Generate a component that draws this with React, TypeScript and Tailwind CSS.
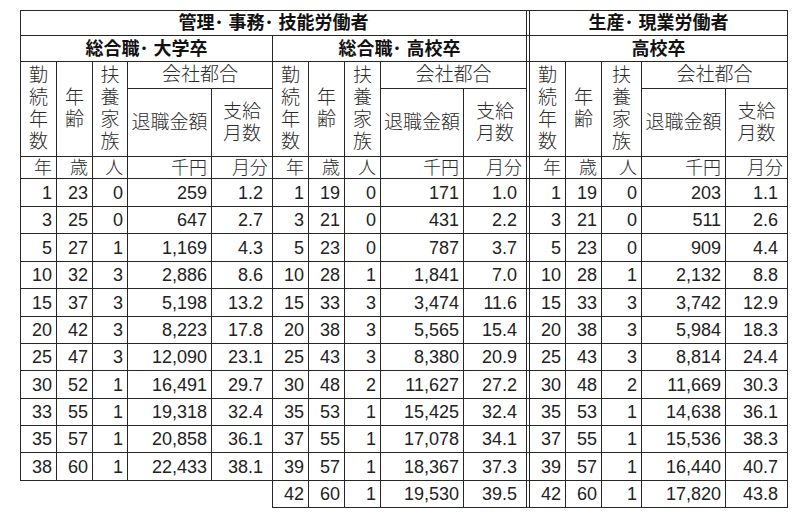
import React from "react";

type Row = [string, string, string, string, string];

const g1: Row[] = [
  ["1", "23", "0", "259", "1.2"],
  ["3", "25", "0", "647", "2.7"],
  ["5", "27", "1", "1,169", "4.3"],
  ["10", "32", "3", "2,886", "8.6"],
  ["15", "37", "3", "5,198", "13.2"],
  ["20", "42", "3", "8,223", "17.8"],
  ["25", "47", "3", "12,090", "23.1"],
  ["30", "52", "1", "16,491", "29.7"],
  ["33", "55", "1", "19,318", "32.4"],
  ["35", "57", "1", "20,858", "36.1"],
  ["38", "60", "1", "22,433", "38.1"],
];

const g2: Row[] = [
  ["1", "19", "0", "171", "1.0"],
  ["3", "21", "0", "431", "2.2"],
  ["5", "23", "0", "787", "3.7"],
  ["10", "28", "1", "1,841", "7.0"],
  ["15", "33", "3", "3,474", "11.6"],
  ["20", "38", "3", "5,565", "15.4"],
  ["25", "43", "3", "8,380", "20.9"],
  ["30", "48", "2", "11,627", "27.2"],
  ["35", "53", "1", "15,425", "32.4"],
  ["37", "55", "1", "17,078", "34.1"],
  ["39", "57", "1", "18,367", "37.3"],
  ["42", "60", "1", "19,530", "39.5"],
];

const g3: Row[] = [
  ["1", "19", "0", "203", "1.1"],
  ["3", "21", "0", "511", "2.6"],
  ["5", "23", "0", "909", "4.4"],
  ["10", "28", "1", "2,132", "8.8"],
  ["15", "33", "3", "3,742", "12.9"],
  ["20", "38", "3", "5,984", "18.3"],
  ["25", "43", "3", "8,814", "24.4"],
  ["30", "48", "2", "11,669", "30.3"],
  ["35", "53", "1", "14,638", "36.1"],
  ["37", "55", "1", "15,536", "38.3"],
  ["39", "57", "1", "16,440", "40.7"],
  ["42", "60", "1", "17,820", "43.8"],
];

const rowHeights = [
  "h-[28px]",
  "h-[27px]",
  "h-[28px]",
  "h-[27px]",
  "h-[28px]",
  "h-[27px]",
  "h-[27px]",
  "h-[28px]",
  "h-[27px]",
  "h-[27px]",
  "h-[28px]",
  "h-[27px]",
];

const B = "border border-[#262626]";
const NUM = `${B} text-right pr-[4px] text-[18px]`;
const NUM_LAST = `${B} text-right pr-[9px] text-[18px]`;
const JP = `${B} text-center text-[19px] font-light text-[#2a2a2a]`;

function DataCells({ r }: { r: Row | undefined }) {
  if (!r) {
    return (
      <>
        <td />
        <td />
        <td />
        <td />
        <td />
      </>
    );
  }
  return (
    <>
      <td className={NUM}>{r[0]}</td>
      <td className={NUM}>{r[1]}</td>
      <td className={NUM}>{r[2]}</td>
      <td className={NUM}>{r[3]}</td>
      <td className={NUM_LAST}>{r[4]}</td>
    </>
  );
}

function HeadTop() {
  return (
    <>
      <td rowSpan={2} className={`${JP} leading-[22px]`}>
        勤<br />続<br />年<br />数
      </td>
      <td rowSpan={2} className={`${JP} leading-[22px]`}>
        年<br />齢
      </td>
      <td rowSpan={2} className={`${JP} leading-[22px]`}>
        扶<br />養<br />家<br />族
      </td>
      <td colSpan={2} className={JP}>
        会社都合
      </td>
    </>
  );
}

function HeadSub() {
  return (
    <>
      <td className={JP}>退職金額</td>
      <td className={`${JP} leading-[22px]`}>
        支給
        <br />
        月数
      </td>
    </>
  );
}

const UNIT = `${B} text-right pr-[4px] text-[18px] font-light text-[#2a2a2a]`;

function Units() {
  return (
    <>
      <td className={UNIT}>年</td>
      <td className={UNIT}>歳</td>
      <td className={UNIT}>人</td>
      <td className={UNIT}>千円</td>
      <td className={UNIT}>月分</td>
    </>
  );
}

export default function App() {
  return (
    <div className="w-[800px] h-[515px] bg-white pt-[10px] pl-[20px] text-[#222] font-['Liberation_Sans','Noto_Sans_CJK_JP',sans-serif] leading-[20px]">
      <table className="table-fixed border-collapse w-[767px]">
        <colgroup>
          <col className="w-[36px]" />
          <col className="w-[36px]" />
          <col className="w-[35px]" />
          <col className="w-[84px]" />
          <col className="w-[61px]" />
          <col className="w-[36px]" />
          <col className="w-[36px]" />
          <col className="w-[36px]" />
          <col className="w-[83px]" />
          <col className="w-[63px]" />
          <col className="w-[3px]" />
          <col className="w-[36px]" />
          <col className="w-[36px]" />
          <col className="w-[40px]" />
          <col className="w-[84px]" />
          <col className="w-[62px]" />
        </colgroup>
        <tbody>
          <tr className="h-[25px]">
            <td colSpan={10} className={`${B} text-center font-bold text-[18px] text-[#111]`}>
              管理･ 事務･ 技能労働者
            </td>
            <td className={B} />
            <td colSpan={5} className={`${B} text-center font-bold text-[18px] text-[#111]`}>
              生産･ 現業労働者
            </td>
          </tr>
          <tr className="h-[26px]">
            <td colSpan={5} className={`${B} text-center font-bold text-[18px] text-[#111]`}>
              総合職･ 大学卒
            </td>
            <td colSpan={5} className={`${B} text-center font-bold text-[18px] text-[#111]`}>
              総合職･ 高校卒
            </td>
            <td className={B} />
            <td colSpan={5} className={`${B} text-center font-bold text-[18px] text-[#111]`}>
              高校卒
            </td>
          </tr>
          <tr className="h-[27px]">
            <HeadTop />
            <HeadTop />
            <td rowSpan={2} className={B} />
            <HeadTop />
          </tr>
          <tr className="h-[68px]">
            <HeadSub />
            <HeadSub />
            <HeadSub />
          </tr>
          <tr className="h-[22px]">
            <Units />
            <Units />
            <td className={B} />
            <Units />
          </tr>
          {rowHeights.map((h, i) => (
            <tr key={i} className={h}>
              <DataCells r={g1[i]} />
              <DataCells r={g2[i]} />
              <td className={B} />
              <DataCells r={g3[i]} />
            </tr>
          ))}
        </tbody>
      </table>
    </div>
  );
}
